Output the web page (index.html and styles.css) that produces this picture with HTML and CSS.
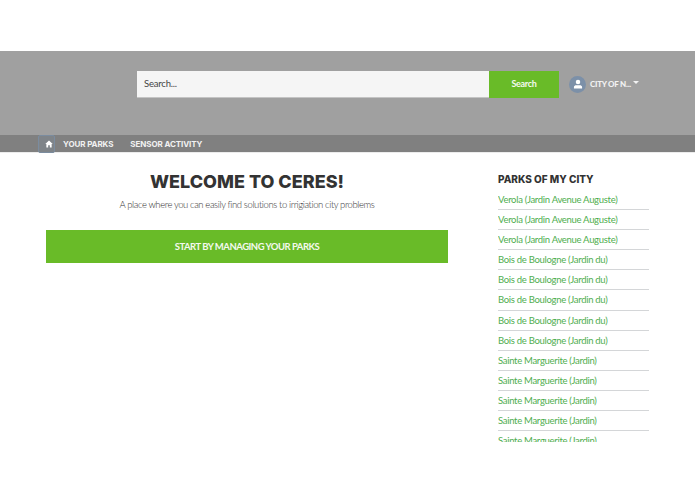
FILE: index.html
```html
<!DOCTYPE html>
<html lang="en">
<head>
<meta charset="utf-8">
<title>Ceres</title>
<link rel="stylesheet" href="styles.css">
</head>
<body>
<header class="header">
  <form class="search">
    <div class="search-input">Search...</div>
    <div class="search-btn">Search</div>
  </form>
  <div class="user">
    <span class="avatar"><svg viewBox="0 0 16 16" width="10" height="10"><circle cx="8" cy="4.6" r="3.6" fill="#fff"/><path d="M1.5 15v-2.2c0-2 2-3 3.5-3h6c1.500 0 3.500 1 3.500 3V15z" fill="#fff"/></svg></span>
    <span class="user-name">CITY OF N...</span>
    <span class="caret"></span>
  </div>
</header>
<nav class="nav">
  <span class="home"><svg viewBox="0 0 16 16" width="8" height="8"><path d="M8 1 0.500 8.200H2.700V15H6.300V10.300H9.700V15H13.300V8.200H15.500z" fill="#fff"/></svg></span>
  <span class="nav-item first">YOUR PARKS</span>
  <span class="nav-item">SENSOR ACTIVITY</span>
</nav>
<main class="main">
  <section class="welcome">
    <h1 class="title">WELCOME TO CERES!</h1>
    <p class="subtitle">A place where you can easily find solutions to irrigiation city problems</p>
    <div class="cta">START BY MANAGING YOUR PARKS</div>
  </section>
  <aside class="side">
    <h2 class="side-title">PARKS OF MY CITY</h2>
    <ul class="parks">
      <li>Verola (Jardin Avenue Auguste)</li>
      <li>Verola (Jardin Avenue Auguste)</li>
      <li>Verola (Jardin Avenue Auguste)</li>
      <li>Bois de Boulogne (Jardin du)</li>
      <li>Bois de Boulogne (Jardin du)</li>
      <li>Bois de Boulogne (Jardin du)</li>
      <li>Bois de Boulogne (Jardin du)</li>
      <li>Bois de Boulogne (Jardin du)</li>
      <li>Sainte Marguerite (Jardin)</li>
      <li>Sainte Marguerite (Jardin)</li>
      <li>Sainte Marguerite (Jardin)</li>
      <li>Sainte Marguerite (Jardin)</li>
      <li>Sainte Marguerite (Jardin)</li>
    </ul>
  </aside>
</main>
</body>
</html>
```
FILE: styles.css
```css
* { box-sizing: border-box; }
html, body { margin: 0; padding: 0; background: #fff; }
body { width: 695px; height: 494px; overflow: hidden; padding-top: 51px; font-family: Lato, "Liberation Sans", sans-serif; color: #333; }

.header { height: 84px; background: #a0a0a0; display: flex; align-items: flex-start; padding: 20px 0 0 137px; }
.search { display: flex; width: 422px; height: 27px; margin: 0; }
.search-input { flex: 1; background: #f5f5f5; border-bottom: 1px solid #c4c4c4; font-size: 9.500px; letter-spacing: -0.2px; line-height: 26px; padding-left: 7px; color: #444; }
.search-btn { width: 70px; background: #69bb28; color: #f4f9ee; font-size: 9px; letter-spacing: -0.3px; font-weight: 700; line-height: 26px; text-align: center; }
.user { display: flex; align-items: center; margin-left: 10px; height: 26px; }
.avatar { width: 17px; height: 17px; border-radius: 50%; background: #7c90a8; display: flex; align-items: center; justify-content: center; }
.user-name { color: #f2f2f2; font-size: 8px; font-weight: 900; letter-spacing: -0.25px; margin-left: 4px; white-space: nowrap; margin-top: -1px; }
.caret { width: 0; height: 0; border: 3px solid transparent; border-top: 3px solid #f2f2f2; border-bottom: 0; margin-left: 2px; margin-top: -4px; }

.nav { height: 18px; background: #808080; border-bottom: 1px solid #ececec; display: flex; align-items: flex-start; padding-left: 38px; }
.nav-item { color: #f2f2f2; font-family: Inter, "Liberation Sans", sans-serif; font-size: 8px; line-height: 18px; font-weight: 700; letter-spacing: -0.1px; margin-left: 17px; white-space: nowrap; }
.nav-item.first { margin-left: 8px; }
.home { width: 17px; height: 18px; background: #7f8489; border: 1px solid #7b8c9f; border-radius: 2px; display: flex; align-items: center; justify-content: center; padding-left: 5px; }

.main { display: flex; align-items: flex-start; padding-left: 46px; }
.welcome { width: 402px; text-align: center; }
.title { margin: 18px 0 0; font-family: Inter, "Liberation Sans", sans-serif; font-size: 18px; line-height: 21px; font-weight: 800; color: #333; }
.subtitle { margin: 6px 0 0; font-size: 9.500px; letter-spacing: -0.4px; font-weight: 300; line-height: 14px; color: #333; }
.cta { margin-top: 18px; height: 33px; background: #69bb28; color: #f4f9ee; font-size: 9.500px; letter-spacing: -0.5px; font-weight: 700; line-height: 33px; }

.side { width: 151px; margin-left: 50px; }
.side-title { margin: 20px 0 0; font-family: Inter, "Liberation Sans", sans-serif; font-size: 10px; line-height: 13px; font-weight: 800; color: #333; }
.parks { list-style: none; margin: 4px 0 0; padding: 0; height: 252px; overflow: hidden; }
.parks li { height: 20.100px; line-height: 19px; font-size: 9.500px; letter-spacing: -0.3px; color: #4fae4f; border-bottom: 1px solid #d4d6d8; white-space: nowrap; }
```
